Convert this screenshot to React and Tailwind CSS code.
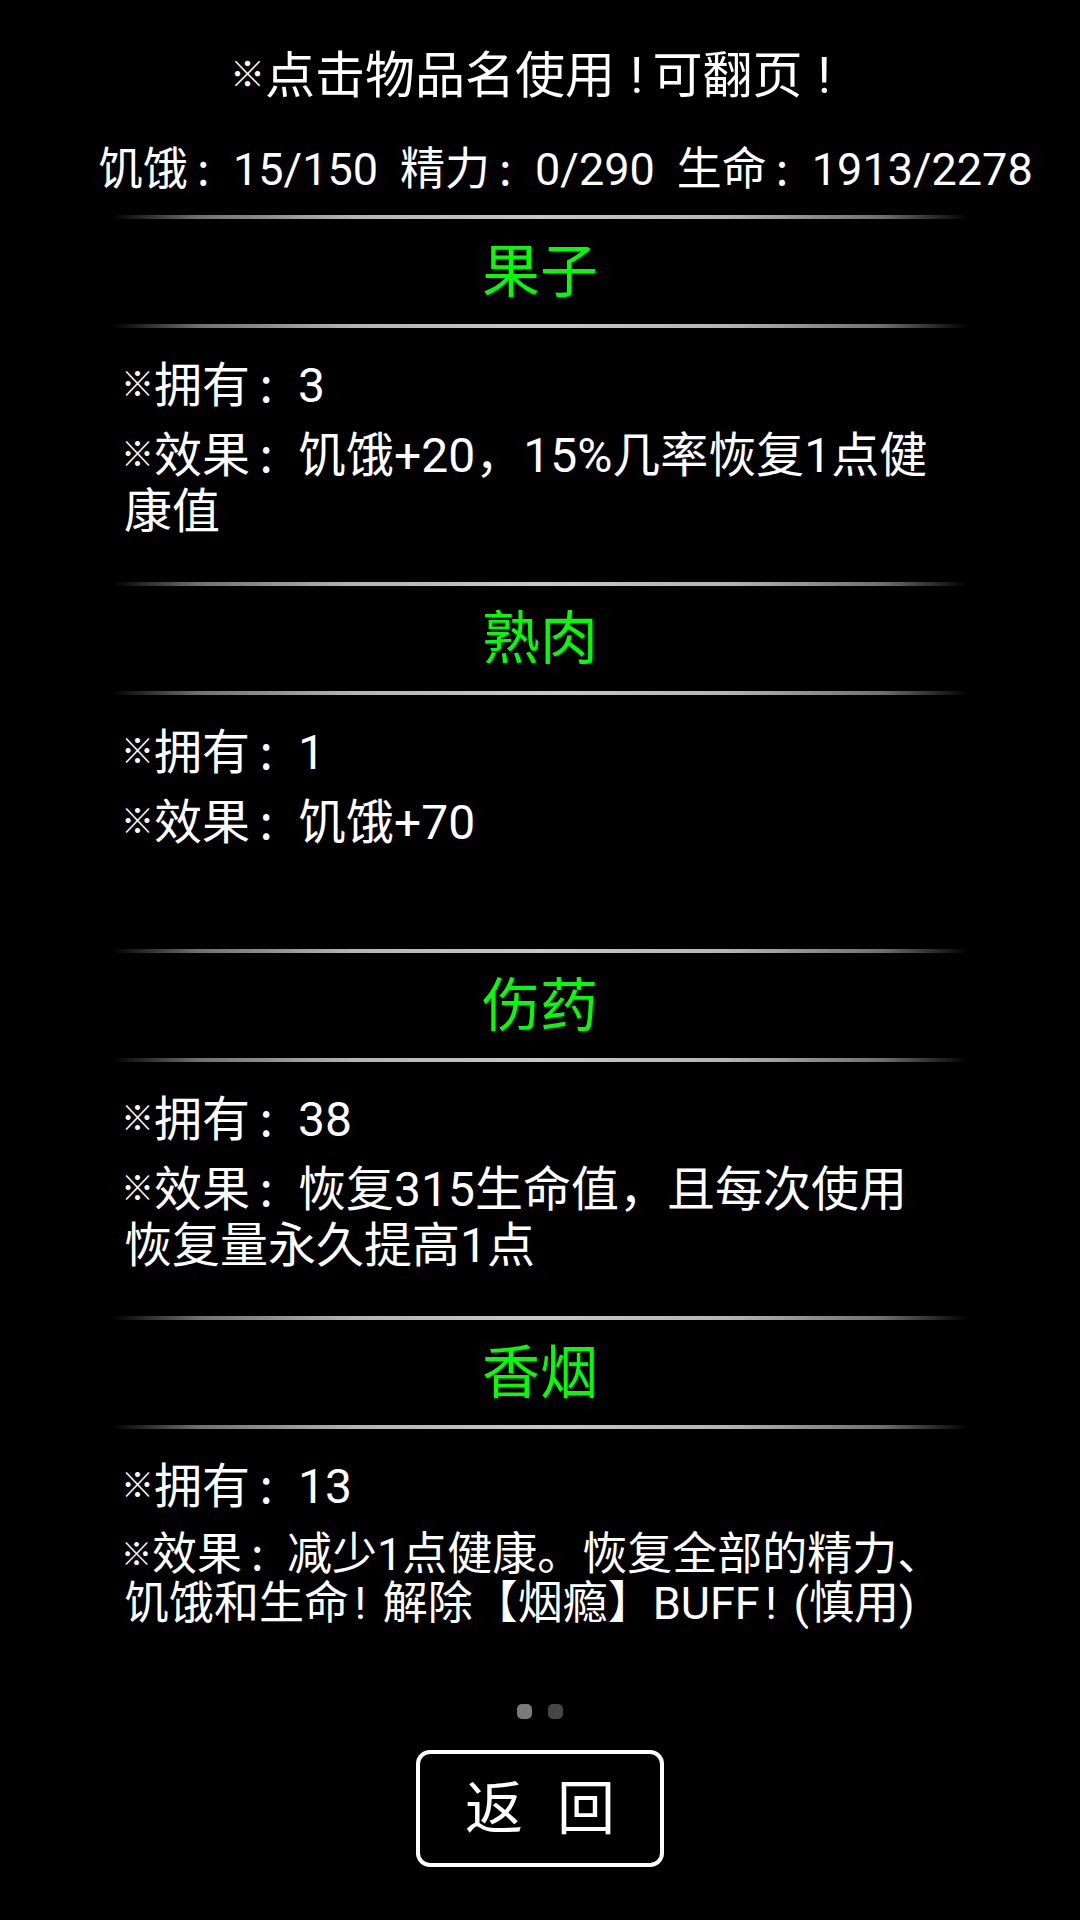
import React from 'react';

const items = [
    { name: '果子', owned: '※拥有：3', effect: ['※效果：饥饿+20，15%几率恢复1点健', '康值'] },
    { name: '熟肉', owned: '※拥有：1', effect: ['※效果：饥饿+70'] },
    { name: '伤药', owned: '※拥有：38', effect: ['※效果：恢复315生命值，且每次使用', '恢复量永久提高1点'] },
    { name: '香烟', owned: '※拥有：13', effect: ['※效果：减少1点健康。恢复全部的精力、', '饥饿和生命！解除【烟瘾】BUFF！(慎用)'], small: true },
];

// the original font has a small ※, a narrow ！ and a colon sitting left of centre
function Rich({ text, mark = 'w-[33px] text-[33px] align-[6px] -ml-[3px]' }) {
    return text.split(/(※|：|！)/).filter(Boolean).map((part, i) => {
        if (part === '※') return <span key={i} className={'inline-block leading-none ' + mark}>※</span>;
        if (part === '：') return <span key={i} className="inline-block leading-none w-[1em] pl-[0.2em] font-['Noto_Sans_CJK_SC',sans-serif]">:</span>;
        if (part === '！') return <span key={i} className="inline-block leading-none w-[0.75em] pl-[0.12em]">!</span>;
        return <span key={i}>{part}</span>;
    });
}

function Divider() {
    return (
        <div className="flex justify-center">
            <div className="w-[856px] h-[4px] bg-[linear-gradient(to_right,transparent_0%,#6f6f6f_10%,#b4b4b4_28%,#c8c8c8_50%,#b4b4b4_72%,#6f6f6f_90%,transparent_100%)]" />
        </div>
    );
}

function Item({ item }) {
    return (
        <div>
            <Divider />
            <div className="h-[105px] flex items-center justify-center text-[58px] leading-none text-[#00ff00]">
                {item.name}
            </div>
            <Divider />
            <div className="h-[254px] pt-[29px] pl-[124px] flex flex-col gap-[13px] text-white">
                <div className="text-[48px] leading-[56px] whitespace-nowrap">
                    <Rich text={item.owned} />
                </div>
                <div className={item.small ? 'text-[45px] leading-[49px]' : 'text-[48px] leading-[56px]'}>
                    {item.effect.map((line) => (
                        <div key={line} className="whitespace-nowrap">
                            <Rich text={line} mark={item.small ? 'w-[31px] text-[31px] align-[5px] -ml-[3px]' : undefined} />
                        </div>
                    ))}
                </div>
            </div>
        </div>
    );
}

export default function App() {
    return (
        <div className="w-[1080px] h-[1920px] bg-black overflow-hidden text-white font-['Roboto','Noto_Sans_CJK_SC',sans-serif]">
            <div className="pt-[46px] pr-[10px] h-[106px] leading-[60px] text-center text-[50px] whitespace-nowrap">
                <Rich text="※点击物品名使用！可翻页！" mark="w-[35px] text-[35px] align-[6px]" />
            </div>
            <div className="mt-[36px] h-[56px] leading-[56px] text-[45px] pl-[98px] whitespace-nowrap flex gap-[22px]">
                <span><Rich text="饥饿：15/150" /></span>
                <span><Rich text="精力：0/290" /></span>
                <span><Rich text="生命：1913/2278" /></span>
            </div>
            <div className="mt-[17px]">
                {items.map((item) => (
                    <Item key={item.name} item={item} />
                ))}
            </div>
            <div className="mt-[21px] flex justify-center gap-[16px]">
                <div className="w-[15px] h-[15px] rounded-[5px] bg-[#7a7a7a]" />
                <div className="w-[15px] h-[15px] rounded-[5px] bg-[#464646]" />
            </div>
            <div className="mt-[31px] flex justify-center">
                <button className="w-[248px] h-[117px] border-[4px] border-white rounded-[14px] flex items-center justify-center gap-[34px] text-[58px] leading-none text-white">
                    <span>返</span>
                    <span>回</span>
                </button>
            </div>
        </div>
    );
}
